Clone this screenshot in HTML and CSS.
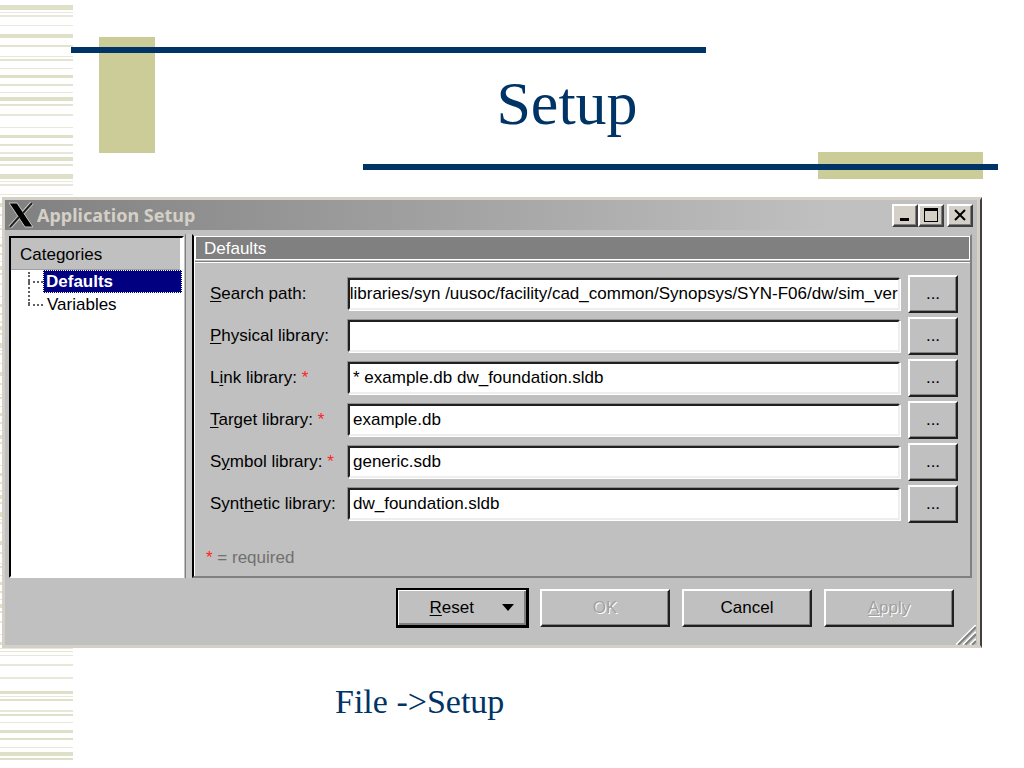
FILE: index.html
```html
<!DOCTYPE html>
<html lang="en">
<head>
    <meta charset="utf-8">
    <title>Setup</title>
    <link rel="stylesheet" href="styles.css">
</head>
<body>
    <svg class="stripes" width="73" height="768" aria-hidden="true">
        <defs>
            <pattern id="stripe" width="73" height="169" patternUnits="userSpaceOnUse">
                <path d="M0 5h73v5H0zM0 34h73v4H0zM0 75h73v3H0zM0 97h73v4H0zM0 135h73v3H0zM0 157h73v4H0z" fill="#dfe0c8"/>
                <path d="M0 45h73v2H0zM0 59h73v2H0zM0 84h73v2H0zM0 104h73v2H0zM0 144h73v2H0zM0 164h73v2H0z" fill="#e2e3d0"/>
                <path d="M0 12h73v1H0zM0 15h73v2H0zM0 25h73v1H0zM0 56h73v1H0zM0 68h73v1H0zM0 92h73v1H0zM0 114h73v2H0zM0 127h73v1H0zM0 152h73v2H0z" fill="#e8e8da"/>
            </pattern>
        </defs>
        <rect width="73" height="647" fill="url(#stripe)"/>
        <path d="M0 691h73v3H0zM0 699h73v2H0zM0 714h73v2H0zM0 730h73v3H0zM0 738h73v2H0zM0 752h73v4H0zM0 758h73v2H0z" fill="#dfe0c8"/>
        <path d="M0 648h73v1H0zM0 651h73v1H0zM0 655h73v1H0zM0 664h73v2H0zM0 677h73v2H0zM0 696h73v1H0zM0 710h73v2H0zM0 722h73v1H0zM0 747h73v1H0z" fill="#e8e8da"/>
    </svg>

    <header class="slide-head">
        <div class="block block-left"></div>
        <div class="rule rule-top"></div>
        <div class="block block-right"></div>
        <div class="rule rule-bottom"></div>
        <h1>Setup</h1>
    </header>

    <main>
        <section class="dialog">
            <div class="titlebar">
                <svg class="xlogo" width="26" height="26" viewBox="0 0 26 26" aria-hidden="true">
                    <path d="M24 1L2 25" stroke="#d0d0c8" stroke-width="4"/>
                    <path d="M1 1h8l16 24h-8z" fill="#000" stroke="#c8c8c4"/>
                    <path d="M24 1L15 11M11 15L2 25" stroke="#222" stroke-width="2"/>
                </svg>
                <h2>Application Setup</h2>
                <div class="winbuttons">
                    <button type="button" aria-label="Minimize"><svg width="14" height="14"><path d="M2 10h9v3H2z"/></svg></button>
                    <button type="button" aria-label="Maximize"><svg width="16" height="16"><path d="M1 1h14v14H1zM2 4v10h12V4z" fill-rule="evenodd"/></svg></button>
                    <button type="button" aria-label="Close" class="close"><svg width="14" height="14"><path d="M2 2l10 10M12 2L2 12" stroke="#000" stroke-width="2"/></svg></button>
                </div>
            </div>

            <div class="panes">
                <nav class="categories">
                    <h3>Categories</h3>
                    <ul>
                        <li><a href="#defaults" class="selected">Defaults</a></li>
                        <li><a href="#variables">Variables</a></li>
                    </ul>
                </nav>
                <div class="splitter"></div>
                <form class="panel" id="defaults">
                    <h3>Defaults</h3>
                    <div class="fields">
                        <label for="search"><u>S</u>earch path:</label>
                        <input type="text" id="search" class="scrolled" value="/libraries/syn /uusoc/facility/cad_common/Synopsys/SYN-F06/dw/sim_ver">
                        <button type="button">...</button>

                        <label for="physical"><u>P</u>hysical library:</label>
                        <input type="text" id="physical">
                        <button type="button">...</button>

                        <label for="link">L<u>i</u>nk library: <span class="req">*</span></label>
                        <input type="text" id="link" value="* example.db dw_foundation.sldb">
                        <button type="button">...</button>

                        <label for="target"><u>T</u>arget library: <span class="req">*</span></label>
                        <input type="text" id="target" value="example.db">
                        <button type="button">...</button>

                        <label for="symbol">S<u>y</u>mbol library: <span class="req">*</span></label>
                        <input type="text" id="symbol" value="generic.sdb">
                        <button type="button">...</button>

                        <label for="synthetic">Synt<u>h</u>etic library:</label>
                        <input type="text" id="synthetic" value="dw_foundation.sldb">
                        <button type="button">...</button>
                    </div>
                    <p class="note"><span class="req">*</span> = required</p>
                </form>
            </div>

            <div class="actions">
                <button type="button" class="reset"><span><u>R</u>eset</span><svg width="12" height="7"><path d="M0 0h12L6 7z"/></svg></button>
                <button type="button" disabled>OK</button>
                <button type="button">Cancel</button>
                <button type="button" disabled><u>A</u>pply</button>
            </div>
            <svg class="grip" width="20" height="20" aria-hidden="true">
                <path d="M0 20L20 0M7 20L20 7M14 20L20 14" stroke="#fff" stroke-width="2"/>
                <path d="M2 20L20 2M9 20L20 9M16 20L20 16" stroke="#808080" stroke-width="2"/>
            </svg>
        </section>
        <p class="caption">File -&gt;Setup</p>
    </main>
</body>
</html>
```
FILE: styles.css
```css
* { box-sizing: border-box; }
body { margin: 0; background: #fff; color: #000; font-family: "Liberation Sans", Arial, sans-serif; font-size: 17px; }
h1, h2, h3, p, ul { margin: 0; padding: 0; font-weight: normal; }
h3 { font-size: 17px; }
button, input { font: inherit; color: inherit; margin: 0; }
svg { display: block; fill: none; }
button svg { fill: #000; }
u { text-underline-offset: 2px; }

/* slide decoration */
.stripes { position: absolute; left: 0; top: 0; z-index: -1; }
.slide-head { position: relative; height: 197px; padding: 67px 0 0 110px; }
.slide-head h1 { position: relative; text-align: center; color: #036; font: 62px/72px "Liberation Serif", "Times New Roman", serif; }
.block, .rule { position: absolute; }
.block { background: #cc9; }
.rule { height: 6px; width: 62%; background: #036; }
.block-left { left: 99px; top: 37px; width: 56px; height: 116px; }
.block-right { right: 41px; top: 152px; width: 165px; height: 27px; }
.rule-top { left: 71px; top: 47px; }
.rule-bottom { right: 26px; top: 164px; }

/* dialog window */
.dialog { position: relative; margin: 0 42px 0 2px; padding-bottom: 17px; background: #c0c0c0; border: 3px solid #d4d0c8; border-right: 2px solid #404040; box-shadow: inset -3px 0 #d4d0c8; }
.titlebar { display: flex; align-items: center; height: 30px; margin-right: 4px; padding: 0 3px; background: linear-gradient(to right, #808080, #c0c0c0 85%); }
.titlebar h2 { flex: 1; padding-left: 3px; color: #d4d0c8; font: bold 18px "Noto Sans", sans-serif; }
.winbuttons { display: flex; }
.winbuttons button { display: flex; align-items: center; justify-content: center; width: 26px; height: 23px; padding: 0; background: #d4d0c8; border: 2px solid; border-color: #fff #404040 #404040 #fff; box-shadow: inset -1px -1px #808080; }
.winbuttons .close { margin-left: 3px; }

.panes { display: flex; height: 348px; padding: 4px 8px 0 4px; }
.categories { width: 175px; margin-top: 2px; background: #fff; border: 2px solid; border-color: #000 #fff #fff #000; }
.categories h3 { height: 32px; margin-right: 2px; padding-left: 9px; line-height: 33px; background: #c0c0c0; border-bottom: 1px solid #a0a0a0; }
.categories ul { position: relative; list-style: none; margin-left: 17px; }
.categories ul::before { content: ""; position: absolute; left: 0; top: 2px; height: 32px; border-left: 2px dotted #606060; }
.categories li { display: flex; align-items: center; height: 23px; }
.categories li::before { content: ""; width: 15px; border-top: 2px dotted #606060; }
.categories a { flex: 1; padding-left: 4px; line-height: 23px; color: #000; text-decoration: none; }
.categories .selected { padding-left: 2px; line-height: 21px; color: #fff; background: #000080; border: 1px dotted #fff; font-weight: bold; }
.splitter { width: 7px; border-left: 1px solid #808080; background: #c8c8c8; margin-left: 1px; }

.panel { flex: 1; border: 2px solid #808080; border-top-color: #c0c0c0; border-left-color: #000; box-shadow: inset 1px 0 #fff; }
.panel h3 { height: 24px; padding-left: 8px; margin-left: 1px; line-height: 23px; color: #fff; background: #808080; border: 1px solid #fff; }
.fields { display: grid; grid-template-columns: 130px 1fr 50px; grid-auto-rows: 38px; column-gap: 8px; row-gap: 4px; align-items: center; margin: 2px 0 0 1px; padding: 12px 12px 0 15px; border-top: 1px solid #fff; box-shadow: 0 -1px #808080; }
.fields label { white-space: nowrap; }
.fields input { width: 100%; height: 32px; padding: 0 3px; border: 2px solid; border-color: #202020 #eee #eee #202020; background: #fff; box-shadow: -1px -1px #909090, 1px 1px #fff; outline: none; }
.fields .scrolled { padding: 0; text-indent: -5px; }
.req { color: #f22; }
.note { padding: 25px 0 0 12px; color: #707070; }

.fields button, .actions button { height: 38px; padding: 0; background: #c0c0c0; border: 2px solid; border-color: #fff #202020 #202020 #fff; box-shadow: inset -1px -1px #808080; }
.actions { display: flex; justify-content: flex-end; align-items: center; gap: 12px; padding: 10px 26px 0 0; }
.actions button { width: 130px; }
.actions button:disabled { color: #a0a0a0; text-shadow: 1px 1px #fff; }
.actions .reset { display: flex; align-items: center; justify-content: flex-end; gap: 28px; width: 133px; height: 40px; margin-right: -1px; padding-right: 12px; border-color: #000; border-width: 2px 3px 3px 2px; box-shadow: inset 1px 1px #fff, inset -2px -2px #808080; }
.grip { position: absolute; right: 4px; bottom: 0; }

.caption { padding: 34px 0 0 335px; color: #036; font: 34px/40px "Liberation Serif", "Times New Roman", serif; }
```
